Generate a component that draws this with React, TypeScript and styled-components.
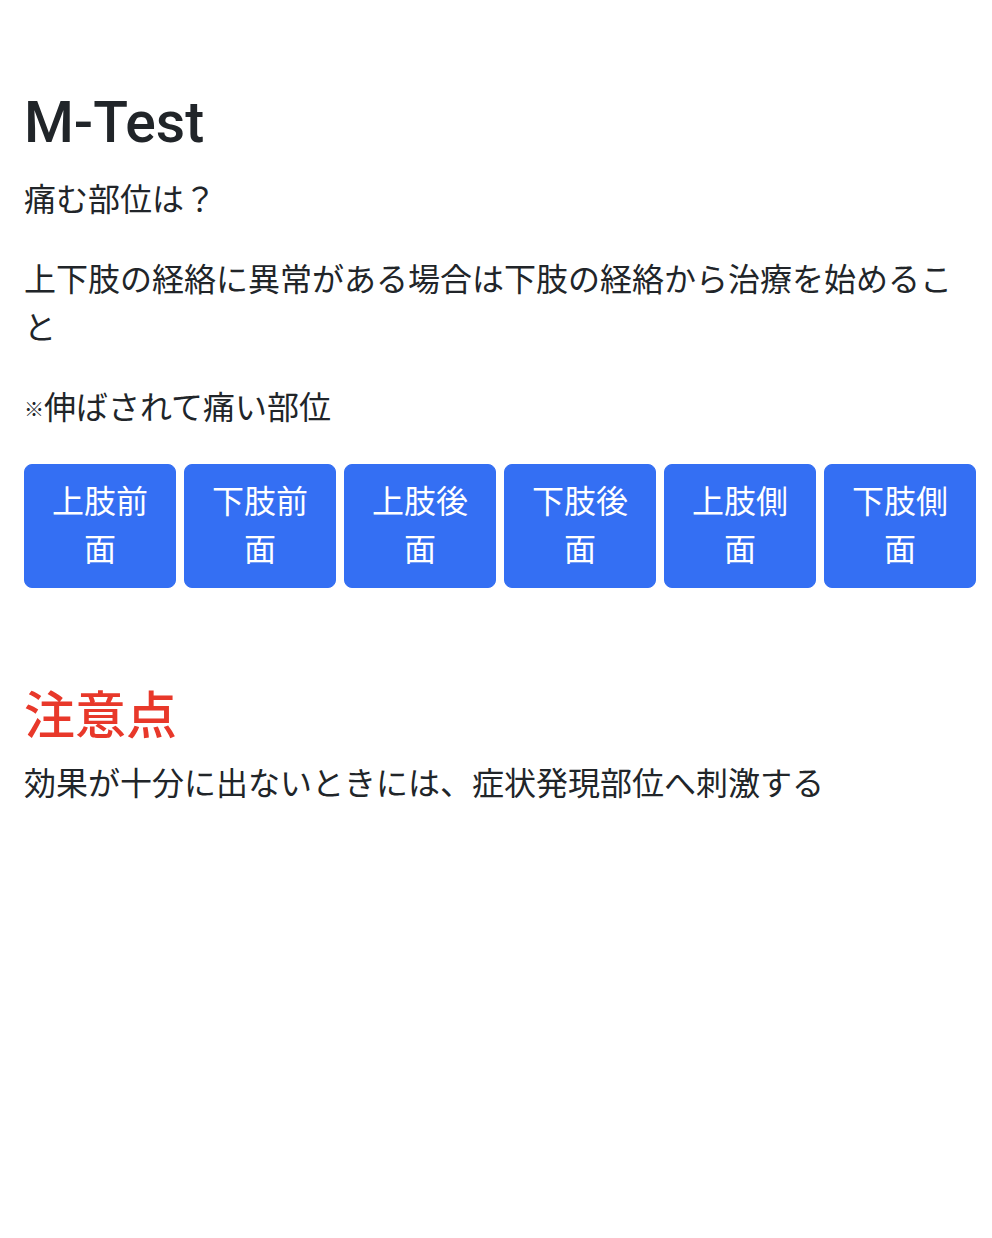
import React from 'react';
import styled, { createGlobalStyle } from 'styled-components';

const GlobalStyle = createGlobalStyle`
  html, body {
    margin: 0;
    padding: 0;
    background: #fff;
  }
  body {
    font-family: "Liberation Sans", "Noto Sans CJK JP", sans-serif;
    font-size: 32px;
    line-height: 1.5;
    color: #212529;
  }
`;

const Page = styled.main`
  padding: 89px 16px 40px 24px;
`;

const Title = styled.h1`
  margin: 0 0 19px;
  font-family: Roboto, "Liberation Sans", sans-serif;
  font-size: 57px;
  font-weight: 500;
  line-height: 1.2;
`;

const Text = styled.p`
  margin: 0 0 32px;
`;

const Mark = styled.span`
  font-size: 20px;
  font-weight: 700;
  vertical-align: 2px;
`;

const ButtonRow = styled.div`
  display: grid;
  grid-template-columns: repeat(6, 1fr);
  gap: 8px;
  margin: 0 0 98px;
`;

const PartButton = styled.button`
  font-family: inherit;
  font-size: 32px;
  line-height: 1.5;
  color: #fff;
  background: #346ff3;
  border: 1px solid #346ff3;
  border-radius: 8px;
  padding: 13px 24px;
  cursor: pointer;
  text-align: center;
`;

const Caution = styled.h2`
  margin: 0 0 12px;
  font-size: 51px;
  font-weight: 500;
  line-height: 1.2;
  color: #e8382a;
`;

const parts = ['上肢前面', '下肢前面', '上肢後面', '下肢後面', '上肢側面', '下肢側面'];

export default function App() {
  return (
    <>
      <GlobalStyle />
      <Page>
        <Title>M-Test</Title>
        <Text>痛む部位は？</Text>
        <Text>上下肢の経絡に異常がある場合は下肢の経絡から治療を始めること</Text>
        <Text>
          <Mark>※</Mark>伸ばされて痛い部位
        </Text>
        <ButtonRow>
          {parts.map((p) => (
            <PartButton key={p} type="button">
              {p}
            </PartButton>
          ))}
        </ButtonRow>
        <Caution>注意点</Caution>
        <Text>効果が十分に出ないときには、症状発現部位へ刺激する</Text>
      </Page>
    </>
  );
}
